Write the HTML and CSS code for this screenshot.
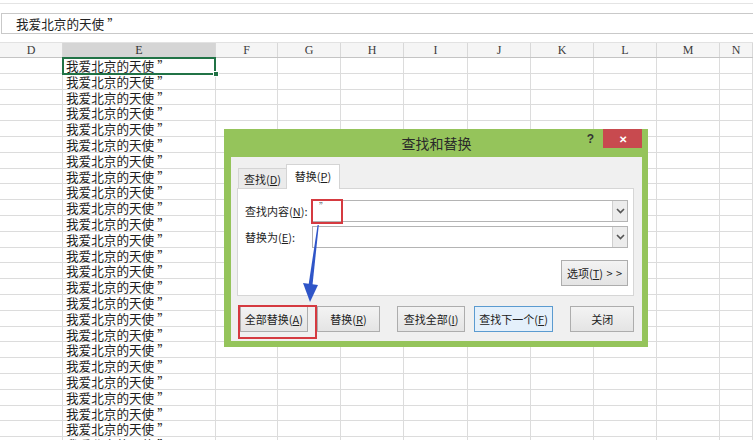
FILE: index.html
```html
<!DOCTYPE html>
<html lang="zh-CN">
<head>
    <meta charset="UTF-8">
    <meta name="viewport" content="width=device-width, initial-scale=1.0">
    <title>查找和替换</title>
    <link rel="stylesheet" href="styles.css">
</head>
<body>
<div class="app">
    <div class="top-strip"></div>
    <div class="formula-bar">我爱北京的天使<span class="q">”</span></div>

    <div class="sheet">
        <div class="col-headers">
            <div class="hd">D</div>
            <div class="hd active">E</div>
            <div class="hd">F</div>
            <div class="hd">G</div>
            <div class="hd">H</div>
            <div class="hd">I</div>
            <div class="hd">J</div>
            <div class="hd">K</div>
            <div class="hd">L</div>
            <div class="hd">M</div>
            <div class="hd">N</div>
        </div>
        <div class="grid">
            <div class="col"></div>
            <div class="col">
                <div class="cell selected">我爱北京的天使<span class="q">”</span><i class="handle"></i></div>
                <div class="cell">我爱北京的天使<span class="q">”</span></div>
                <div class="cell">我爱北京的天使<span class="q">”</span></div>
                <div class="cell">我爱北京的天使<span class="q">”</span></div>
                <div class="cell">我爱北京的天使<span class="q">”</span></div>
                <div class="cell">我爱北京的天使<span class="q">”</span></div>
                <div class="cell">我爱北京的天使<span class="q">”</span></div>
                <div class="cell">我爱北京的天使<span class="q">”</span></div>
                <div class="cell">我爱北京的天使<span class="q">”</span></div>
                <div class="cell">我爱北京的天使<span class="q">”</span></div>
                <div class="cell">我爱北京的天使<span class="q">”</span></div>
                <div class="cell">我爱北京的天使<span class="q">”</span></div>
                <div class="cell">我爱北京的天使<span class="q">”</span></div>
                <div class="cell">我爱北京的天使<span class="q">”</span></div>
                <div class="cell">我爱北京的天使<span class="q">”</span></div>
                <div class="cell">我爱北京的天使<span class="q">”</span></div>
                <div class="cell">我爱北京的天使<span class="q">”</span></div>
                <div class="cell">我爱北京的天使<span class="q">”</span></div>
                <div class="cell">我爱北京的天使<span class="q">”</span></div>
                <div class="cell">我爱北京的天使<span class="q">”</span></div>
                <div class="cell">我爱北京的天使<span class="q">”</span></div>
                <div class="cell">我爱北京的天使<span class="q">”</span></div>
                <div class="cell">我爱北京的天使<span class="q">”</span></div>
                <div class="cell">我爱北京的天使<span class="q">”</span></div>
                <div class="cell">我爱北京的天使<span class="q">”</span></div>
            </div>
            <div class="col"></div>
            <div class="col"></div>
            <div class="col"></div>
            <div class="col"></div>
            <div class="col"></div>
            <div class="col"></div>
            <div class="col"></div>
            <div class="col"></div>
            <div class="col"></div>
        </div>
    </div>

    <div class="dialog">
        <div class="title-bar">
            <span></span>
            <span class="title">查找和替换</span>
            <span class="title-controls">
                <span class="help">?</span>
                <span class="close">&#x2715;</span>
            </span>
        </div>
        <div class="dialog-body">
            <div class="tabs">
                <div class="tab">查找(<u>D</u>)</div>
                <div class="tab current">替换(<u>P</u>)</div>
            </div>
            <div class="tab-panel">
                <div class="field">
                    <label>查找内容(<u>N</u>):</label>
                    <div class="combo">
                        <span class="value">”</span>
                        <span class="drop"><svg width="9" height="6" viewBox="0 0 9 6"><path d="M1 1 L4.5 4.5 L8 1" fill="none" stroke="#555" stroke-width="1.6"/></svg></span>
                    </div>
                </div>
                <div class="field">
                    <label>替换为(<u>E</u>):</label>
                    <div class="combo">
                        <span class="value"></span>
                        <span class="drop"><svg width="9" height="6" viewBox="0 0 9 6"><path d="M1 1 L4.5 4.5 L8 1" fill="none" stroke="#555" stroke-width="1.6"/></svg></span>
                    </div>
                </div>
                <div class="options-row">
                    <button class="btn options">选项(<u>T</u>) &gt; &gt;</button>
                </div>
            </div>
            <div class="actions">
                <button class="btn w68">全部替换(<u>A</u>)</button>
                <button class="btn w64">替换(<u>R</u>)</button>
                <button class="btn w68 sep">查找全部(<u>I</u>)</button>
                <button class="btn w80 default">查找下一个(<u>F</u>)</button>
                <button class="btn w64 sep">关闭</button>
            </div>
        </div>
    </div>

    <!-- annotations drawn over the screenshot -->
    <div class="mark mark-find"></div>
    <div class="mark mark-all"></div>
    <svg class="arrow" width="30" height="84" viewBox="0 0 30 84">
        <polygon points="22.6,3 23.8,3 17.4,64 13.4,64" fill="#2f55c8"/>
        <polygon points="8,61 23,63 15,80" fill="#2f55c8"/>
    </svg>
</div>
</body>
</html>
```

FILE: styles.css
```css
body {
    margin: 0;
    background-color: white;
    font-family: "Noto Sans CJK SC", "Noto Sans", sans-serif;
}
.app {
    position: relative;
    width: 753px;
    height: 440px;
    overflow: hidden;
    background-color: white;
}
.top-strip {
    margin-top: 3px;
    height: 9px;
    border-top: 1px solid #e4e4e4;
}
.formula-bar {
    height: 19px;
    margin-left: 1px;
    padding-left: 14px;
    border: 1px solid #c9c9c9;
    border-right: none;
    font-size: 12.6px;
    line-height: 19px;
    color: #222;
}
.q {
    margin-left: 3px;
}
.sheet {
    margin-top: 8px;
}
.col-headers,
.grid {
    display: grid;
    grid-template-columns: 63px 153px 62px 63px 63px 64px 63px 63px 63px 63px 1fr;
}
.col-headers {
    height: 14px;
    border-top: 1px solid #e2e2e2;
    border-bottom: 1px solid #c4c4c4;
    background-color: #f5f5f5;
}
.hd {
    border-right: 1px solid #d8d8d8;
    text-align: center;
    font-family: "Liberation Serif", serif;
    font-size: 12px;
    line-height: 14px;
    color: #3c3c3c;
}
.hd.active {
    background-color: #d5d5d5;
    color: #333;
}
.grid {
    height: 383px;
    background-image: repeating-linear-gradient(to bottom, transparent 0, transparent 14.8px, #dcdcdc 14.8px, #dcdcdc 15.8px);
}
.col {
    border-right: 1px solid #dcdcdc;
}
.cell {
    height: 15.8px;
    padding-left: 3px;
    font-size: 12.6px;
    line-height: 15.8px;
    color: #1e1e1e;
    white-space: nowrap;
}
.cell.selected {
    position: relative;
    outline: 2px solid #217346;
    outline-offset: -1px;
}
.handle {
    position: absolute;
    right: -4px;
    bottom: -3px;
    width: 4px;
    height: 4px;
    background-color: #217346;
    border: 1px solid white;
}

/* dialog */
.dialog {
    position: absolute;
    left: 224px;
    top: 129px;
    width: 424px;
    padding: 0 6px 6px 7px;
    box-sizing: border-box;
    background-color: #95c45b;
    font-size: 11px;
    color: #1e1e1e;
}
.title-bar {
    height: 28px;
    display: grid;
    grid-template-columns: 1fr auto 1fr;
}
.title {
    font-size: 14px;
    line-height: 28px;
    color: #2a2a2a;
}
.title-controls {
    display: flex;
    justify-content: flex-end;
    align-items: flex-start;
}
.help {
    margin-top: 3px;
    margin-right: 9px;
    font-family: "Liberation Sans", sans-serif;
    font-weight: bold;
    font-size: 12px;
    color: #333;
}
.close {
    width: 39px;
    height: 19px;
    background-color: #c84a4f;
    color: white;
    text-align: center;
    font-size: 10px;
    font-weight: bold;
    line-height: 19px;
}
.dialog-body {
    background-color: #f0f0f0;
    padding: 7px 8px 9px 6px;
}
.tabs {
    display: flex;
    align-items: flex-end;
    height: 24px;
    padding-left: 1px;
}
.tab {
    width: 48px;
    height: 20px;
    box-sizing: border-box;
    border: 1px solid #d4d4d4;
    border-bottom: none;
    border-right: none;
    background-color: #ebebeb;
    text-align: center;
    line-height: 20px;
}
.tab.current {
    position: relative;
    z-index: 1;
    width: 54px;
    height: 25px;
    margin-bottom: -1px;
    border-right: 1px solid #d4d4d4;
    background-color: white;
    line-height: 22px;
}
.tab-panel {
    background-color: white;
    border: 1px solid #d6d6d6;
    padding: 11px 5px 9px 7px;
}
.field {
    display: flex;
    align-items: center;
    height: 22px;
    margin-bottom: 4px;
}
.field label {
    width: 67px;
    white-space: nowrap;
}
.combo {
    flex: 1;
    display: flex;
    height: 22px;
    box-sizing: border-box;
    border: 1px solid #b4b4b4;
    background-color: white;
}
.combo .value {
    flex: 1;
    padding-left: 6px;
    font-size: 9px;
    line-height: 12px;
    color: #666;
}
.drop {
    width: 14px;
    display: flex;
    align-items: center;
    justify-content: center;
    border-left: 1px solid #cfcfcf;
    background-color: #ececec;
}
.options-row {
    display: flex;
    justify-content: flex-end;
    margin-top: 12px;
}
.btn {
    height: 26px;
    padding: 0;
    border: 1px solid #adadad;
    background: linear-gradient(#f3f3f3, #e4e4e4);
    font-family: "Noto Sans CJK SC", "Noto Sans", sans-serif;
    font-size: 11px;
    color: #222;
}
.btn.options {
    width: 67px;
    word-spacing: 1px;
}
.btn.default {
    border-color: #5b9bd0;
    background: #e4f0fb;
}
.actions {
    display: flex;
    gap: 9px;
    margin-top: 10px;
    padding-left: 3px;
}
.w64 { width: 64px; }
.w68 { width: 68px; }
.w80 { width: 80px; }
.sep { margin-left: 8px; }

/* red boxes and arrow */
.mark {
    position: absolute;
    box-sizing: border-box;
    border: 2px solid #d53a40;
}
.mark-find {
    left: 311px;
    top: 199px;
    width: 32px;
    height: 25px;
}
.mark-all {
    left: 238px;
    top: 305px;
    width: 79px;
    height: 34px;
}
.arrow {
    position: absolute;
    left: 295px;
    top: 222px;
}
```
